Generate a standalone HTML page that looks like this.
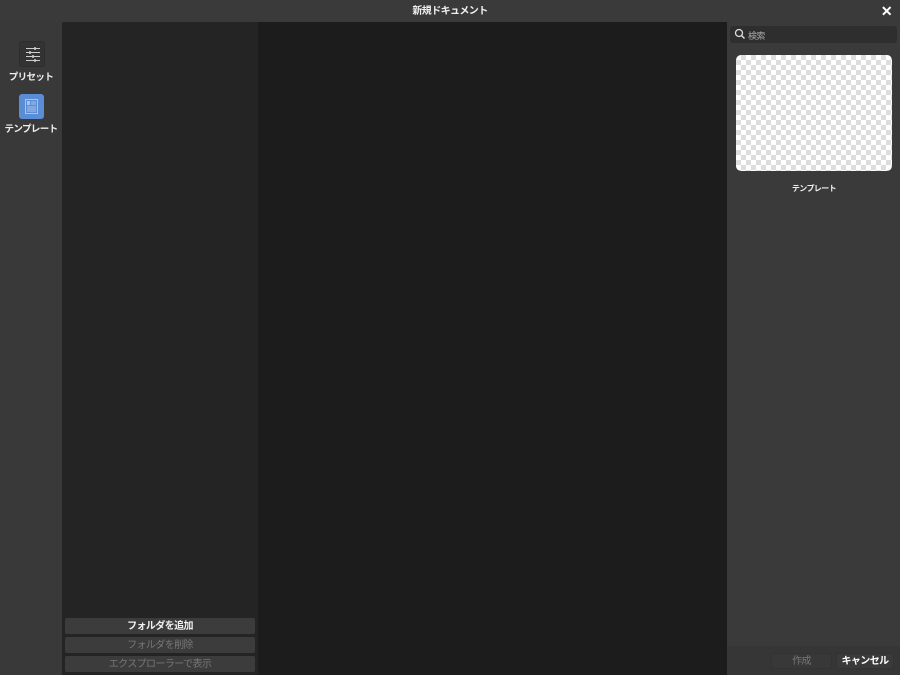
<!DOCTYPE html>
<html><head><meta charset="utf-8"><style>
*{margin:0;padding:0;box-sizing:border-box}
body{width:900px;height:675px;background:#3a3a3a;font-family:"Liberation Sans","Noto Sans CJK JP",sans-serif;position:relative;overflow:hidden;color:#eee;letter-spacing:-0.6px}
.abs{position:absolute}
.title{left:0;top:0;width:900px;height:22px;text-align:center;font-size:10px;font-weight:bold;line-height:24px;color:#f0f0f0}
.btn{position:absolute;left:65px;width:190px;height:16px;background:#3c3c3c;border-radius:2px;font-size:10px;text-align:center;line-height:18px;color:#777}
.check{left:736px;top:55px;width:156px;height:116px;border-radius:5px;background-color:#fff;background-image:linear-gradient(45deg,#ddd 25%,transparent 25%,transparent 75%,#ddd 75%),linear-gradient(45deg,#ddd 25%,transparent 25%,transparent 75%,#ddd 75%);background-size:10px 10px;background-position:0 0,5px 5px}
</style></head><body>
<div class="abs title">新規ドキュメント</div>
<div class="abs" style="right:8px;top:3px;font-size:14px;font-weight:bold;color:#fff">✕</div>
<div class="abs" style="left:0;top:22px;width:62px;height:653px;background:#393939"></div>
<div class="abs" style="left:62px;top:22px;width:196px;height:653px;background:#242424"></div>
<div class="abs" style="left:258px;top:22px;width:469px;height:653px;background:#1c1c1c"></div>
<div class="abs" style="left:727px;top:22px;width:173px;height:653px;background:#3a3a3a"></div>
<div class="abs" style="left:727px;top:646px;width:173px;height:29px;background:#363636"></div>
<div class="abs" style="left:19px;top:41px;width:26px;height:26px;border-radius:3px;background:#333;border:1px solid #2e2e2e">
<svg width="26" height="26" viewBox="0 0 26 26" stroke="#ccc" stroke-width="1"><path d="M6 6.5h14M6 10.5h14M6 14.5h14M6 18.5h14"/><path d="M15 5v3M10 9v3M13 13v3M15 17v3" stroke-width="1.5"/></svg></div>
<div class="abs" style="left:0;top:69px;width:62px;text-align:center;font-size:9.5px;font-weight:bold">プリセット</div>
<div class="abs" style="left:19px;top:94px;width:25px;height:25px;border-radius:3px;background:#5b8dd6">
<svg width="25" height="25" viewBox="0 0 25 25"><rect x="6.5" y="5.5" width="12" height="14" fill="none" stroke="#a9c3ea"/><rect x="8" y="7" width="3" height="4" fill="#a9c3ea"/><path d="M12 8h5M12 10h5M8 13h9M8 15h9M8 17h9" stroke="#a9c3ea"/></svg></div>
<div class="abs" style="left:0;top:121px;width:62px;text-align:center;font-size:9.5px;font-weight:bold">テンプレート</div>
<div class="abs" style="left:730px;top:26px;width:167px;height:17px;background:#2e2e2e;border-radius:3px"></div>
<svg class="abs" style="left:734px;top:28px" width="12" height="12" viewBox="0 0 12 12"><circle cx="5" cy="5" r="3.5" fill="none" stroke="#ddd" stroke-width="1.3"/><path d="M7.5 7.5l3 3" stroke="#ddd" stroke-width="1.5"/></svg>
<div class="abs" style="left:748px;top:29px;font-size:9px;color:#aaa">検索</div>
<div class="abs check"></div>
<div class="abs" style="left:736px;top:183px;width:156px;text-align:center;font-size:8px;font-weight:bold">テンプレート</div>
<div class="btn" style="top:618px;color:#f0f0f0;font-weight:bold">フォルダを追加</div>
<div class="btn" style="top:637px">フォルダを削除</div>
<div class="btn" style="top:656px">エクスプローラーで表示</div>
<div class="abs" style="left:771px;top:653px;width:61px;height:16px;border:1px solid #333;border-radius:2px;background:#383838;font-size:10px;color:#777;text-align:center;line-height:16px">作成</div>
<div class="abs" style="left:836px;top:653px;width:58px;height:16px;border:1px solid #333;border-radius:2px;background:#3a3a3a;font-size:10px;font-weight:bold;color:#fff;text-align:center;line-height:16px">キャンセル</div>
</body></html>
